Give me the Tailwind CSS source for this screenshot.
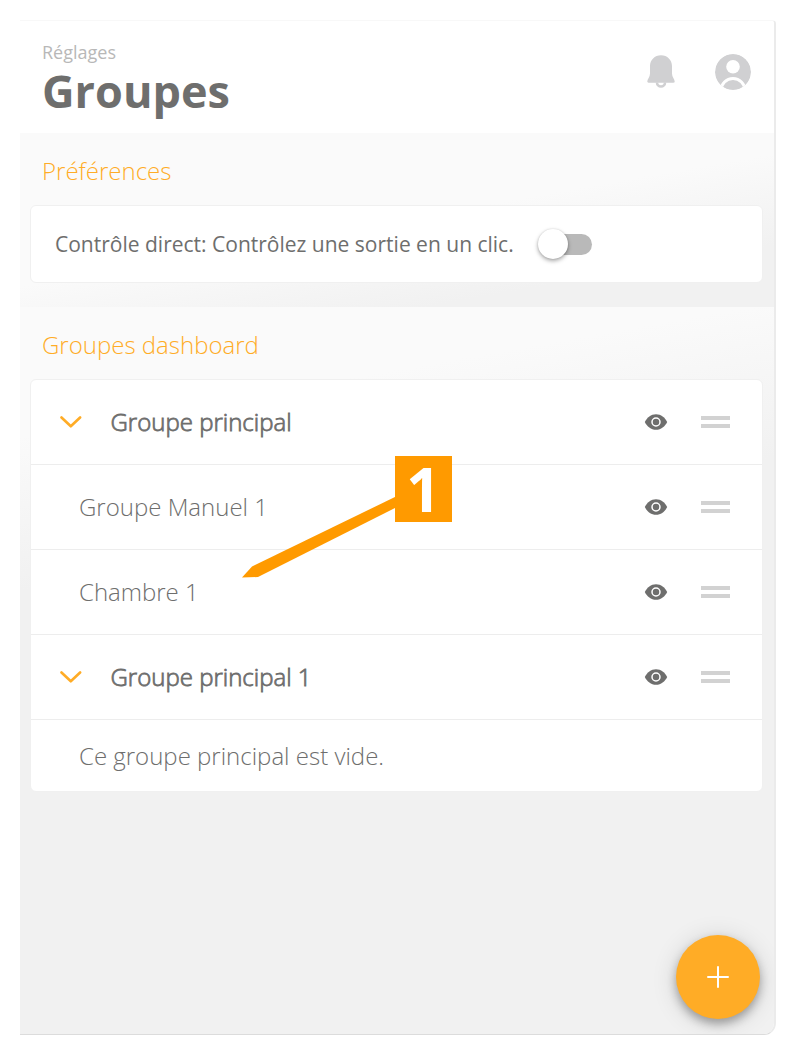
<!DOCTYPE html>
<html lang="fr">

<head>
    <meta charset="UTF-8" />
    <meta name="viewport" content="width=device-width, initial-scale=1.0" />
    <title>Réglages - Groupes</title>
    <script src="https://cdn.jsdelivr.net/npm/@tailwindcss/browser@4"></script>
</head>

<body class="bg-white p-5 h-[1055px] overflow-hidden font-['Open_Sans',sans-serif] text-[#6e6e6d]">

    <div class="relative w-[756px] h-[1015px] flex flex-col border-t border-t-[#f8f8f8] border-r-2 border-r-[#ebebeb] border-b border-b-[#dcdcdc] rounded-tr-[4px] rounded-br-[12px] overflow-hidden">

        <!-- Header -->
        <header class="h-28 shrink-0 bg-white flex justify-between pl-[22px] pr-[23px]">
            <div>
                <p class="mt-[19px] text-[18px] leading-6 text-[#b8b8b8]">Réglages</p>
                <h1 class="text-[45px] leading-[54px] font-bold">Groupes</h1>
            </div>
            <div class="flex gap-10 mt-[33px] text-[#d0d0d2]">
                <svg class="w-7 h-9" viewBox="0 0 28 36" fill="currentColor">
                    <path d="M14 1.200C7.600 1.200 3 6 3 12v7.500c0 3.500-2.700 5.500-2.700 8 0 .8.5 1.200 1.200 1.200h25c.7 0 1.200-.4 1.200-1.200 0-2.500-2.700-4.500-2.700-8V12c0-6-4.600-10.800-11-10.800z" />
                    <path d="M10 28.500a4 4 0 0 0 8 0" fill="none" stroke="currentColor" stroke-width="2.600" />
                </svg>
                <svg class="w-9 h-9" viewBox="0 0 36 36">
                    <defs>
                        <clipPath id="avatar"><circle cx="18" cy="18" r="18" /></clipPath>
                    </defs>
                    <g clip-path="url(#avatar)">
                        <circle cx="18" cy="18" r="18" fill="currentColor" />
                        <circle cx="18" cy="12.800" r="6.800" fill="#fff" />
                        <circle cx="18" cy="36.500" r="12" fill="none" stroke="#fff" stroke-width="3" />
                    </g>
                </svg>
            </div>
        </header>

        <!-- Préférences -->
        <section class="h-[174px] shrink-0 px-[10px] bg-[linear-gradient(170deg,#fafafa_50%,#f1f1f1_80%)]">
            <h2 class="h-[72px] pl-3 pt-[22px] text-[24px] leading-8 font-light text-[#ffac26]">Préférences</h2>
            <div class="w-[733px] h-[78px] flex items-center pl-6 bg-white border border-[#f0f0f0] rounded-md">
                <span class="text-[21px] leading-7">Contrôle direct: Contrôlez une sortie en un clic.</span>
                <div class="relative ml-6 w-[54px] h-[30px] flex items-center justify-end">
                    <div class="w-[50px] h-[21px] rounded-full bg-[#b9b9b9]"></div>
                    <div class="absolute left-0 top-0 size-[30px] rounded-full bg-white shadow-[0_2px_4px_rgba(0,0,0,0.35),0_0_2px_rgba(0,0,0,0.12)]"></div>
                </div>
            </div>
        </section>

        <!-- Groupes dashboard -->
        <section class="flex-1 px-[10px] bg-[linear-gradient(170deg,#fafafa_15%,#f1f1f1_33%)]">
            <h2 class="h-[72px] pl-3 pt-[22px] text-[24px] leading-8 font-light text-[#ffac26]">Groupes dashboard</h2>
            <ul class="w-[733px] bg-white border border-[#f0f0f0] rounded-md text-[24px] leading-8 font-light">
                <li class="h-[85px] flex items-center border-b border-[#ededed] pl-[29px] pr-8">
                    <svg class="w-[22px] h-3" viewBox="0 0 22 12" fill="none" stroke="#ffac26" stroke-width="2.600" stroke-linecap="round" stroke-linejoin="round"><path d="M1.500 1.500l9.300 8.800 9.300-8.800" /></svg>
                    <span class="ml-[28.5px] flex-1 [-webkit-text-stroke:0.8px_#6e6e6d]">Groupe principal</span>
                    <svg class="w-6 h-4" viewBox="0 0 24 16"><path d="M.8 8C3 3.500 7 .2 12 .2S21 3.500 23.200 8C21 12.500 17 15.800 12 15.800S3 12.500.8 8z" fill="#6e6e6d" /><circle cx="12" cy="8" r="4" fill="none" stroke="#fff" stroke-width="1.500" /></svg>
                    <span class="ml-8 w-[30px] pl-[0.5px] flex flex-col gap-1"><i class="h-1 bg-[#d2d2d2]"></i><i class="h-1 bg-[#d2d2d2]"></i></span>
                </li>
                <li class="h-[85px] flex items-center border-b border-[#ededed] pl-12 pr-8">
                    <span class="flex-1">Groupe Manuel 1</span>
                    <svg class="w-6 h-4" viewBox="0 0 24 16"><path d="M.8 8C3 3.500 7 .2 12 .2S21 3.500 23.200 8C21 12.500 17 15.800 12 15.800S3 12.500.8 8z" fill="#6e6e6d" /><circle cx="12" cy="8" r="4" fill="none" stroke="#fff" stroke-width="1.500" /></svg>
                    <span class="ml-8 w-[30px] pl-[0.5px] flex flex-col gap-1"><i class="h-1 bg-[#d2d2d2]"></i><i class="h-1 bg-[#d2d2d2]"></i></span>
                </li>
                <li class="h-[85px] flex items-center border-b border-[#ededed] pl-12 pr-8">
                    <span class="flex-1">Chambre 1</span>
                    <svg class="w-6 h-4" viewBox="0 0 24 16"><path d="M.8 8C3 3.500 7 .2 12 .2S21 3.500 23.200 8C21 12.500 17 15.800 12 15.800S3 12.500.8 8z" fill="#6e6e6d" /><circle cx="12" cy="8" r="4" fill="none" stroke="#fff" stroke-width="1.500" /></svg>
                    <span class="ml-8 w-[30px] pl-[0.5px] flex flex-col gap-1"><i class="h-1 bg-[#d2d2d2]"></i><i class="h-1 bg-[#d2d2d2]"></i></span>
                </li>
                <li class="h-[85px] flex items-center border-b border-[#ededed] pl-[29px] pr-8">
                    <svg class="w-[22px] h-3" viewBox="0 0 22 12" fill="none" stroke="#ffac26" stroke-width="2.600" stroke-linecap="round" stroke-linejoin="round"><path d="M1.500 1.500l9.300 8.800 9.300-8.800" /></svg>
                    <span class="ml-[28.5px] flex-1 [-webkit-text-stroke:0.8px_#6e6e6d]">Groupe principal 1</span>
                    <svg class="w-6 h-4" viewBox="0 0 24 16"><path d="M.8 8C3 3.500 7 .2 12 .2S21 3.500 23.200 8C21 12.500 17 15.800 12 15.800S3 12.500.8 8z" fill="#6e6e6d" /><circle cx="12" cy="8" r="4" fill="none" stroke="#fff" stroke-width="1.500" /></svg>
                    <span class="ml-8 w-[30px] pl-[0.5px] flex flex-col gap-1"><i class="h-1 bg-[#d2d2d2]"></i><i class="h-1 bg-[#d2d2d2]"></i></span>
                </li>
                <li class="h-[71px] flex items-center pl-12">Ce groupe principal est vide.</li>
            </ul>
        </section>

        <!-- Annotation -->
        <svg class="absolute left-[222px] top-[475px] w-[155px] h-[84px]" viewBox="0 0 155 84" fill="#ff9a00"><path d="M0 81.500L10 70.500 155 0V11L16 81z" /></svg>
        <div class="absolute left-[375px] top-[435px] w-[57px] h-[66px] bg-[#ff9a00] text-white font-['Open_Sans',sans-serif] font-bold text-[60px] leading-[66px] text-center">1</div>

        <!-- Bouton ajouter -->
        <button class="absolute left-[656px] top-[914px] size-[84px] rounded-full bg-[#ffac26] flex items-center justify-center shadow-[0_5px_10px_rgba(0,0,0,0.3),0_3px_26px_rgba(0,0,0,0.14)]">
            <svg class="size-6" viewBox="0 0 24 24" fill="none" stroke="#fff" stroke-width="2" stroke-linecap="round"><path d="M12 2v20M2 12h20" /></svg>
        </button>
    </div>

</body>

</html>
